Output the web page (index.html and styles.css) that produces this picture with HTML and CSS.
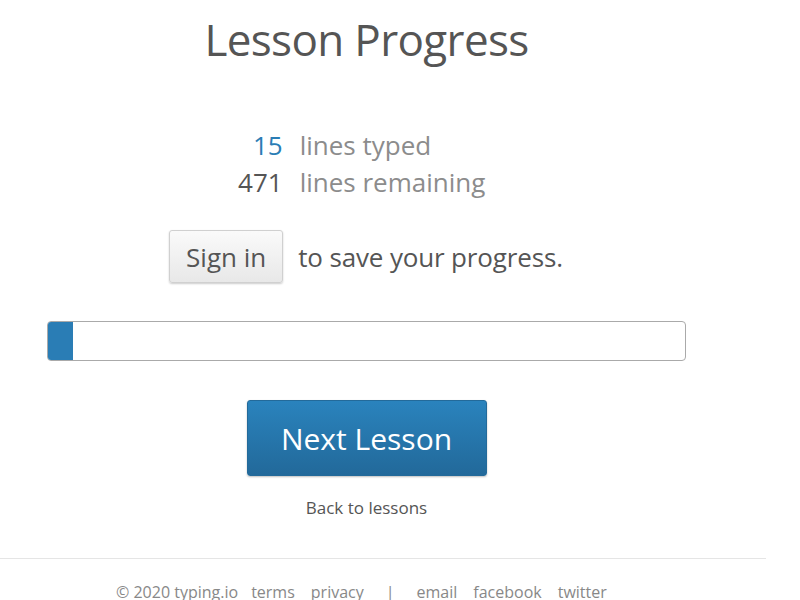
FILE: index.html
```html
<!DOCTYPE html>
<html>
<head>
<meta charset="utf-8">
<link rel="stylesheet" href="styles.css">
</head>
<body>
<div class="page">
  <main class="content">
    <h1 class="title">Lesson Progress</h1>
    <div class="stats">
      <div class="stat"><span class="num typed">15</span><span class="label">lines typed</span></div>
      <div class="stat"><span class="num">471</span><span class="label">lines remaining</span></div>
    </div>
    <div class="signin-row">
      <button class="signin">Sign in</button>
      <span class="save">to save your progress.</span>
    </div>
    <div class="bar"><div class="fill" style="width:25px"></div></div>
    <button class="next">Next Lesson</button>
    <a class="back" href="#">Back to lessons</a>
  </main>
  <footer class="footer">
    <div class="links">
      <span class="copy">© 2020 typing.io</span>
      <a href="#">terms</a>
      <a href="#">privacy</a>
      <span class="sep">|</span>
      <a href="#">email</a>
      <a href="#">facebook</a>
      <a href="#">twitter</a>
    </div>
  </footer>
</div>
</body>
</html>
```
FILE: styles.css
```css
html, body { margin: 0; padding: 0; background: #fff; }
body { font-family: "Open Sans", "Noto Sans", sans-serif; color: #555; }
.page { width: 766px; }
.content {
  width: 733px;
  display: flex;
  flex-direction: column;
  align-items: center;
}
.title {
  margin: 11px 0 0;
  font-weight: 400;
  font-size: 44px;
  line-height: 56px;
  color: #555;
  letter-spacing: -0.65px;
}
.stats {
  margin-top: 60px;
  margin-right: 28px;
  display: flex;
  flex-direction: column;
  font-size: 26px;
  line-height: 37px;
}
.stat { display: flex; }
.num { width: 63px; text-align: right; margin-right: 17px; color: #555; }
.num.typed { color: #2a7db5; }
.label { color: #8c8c8c; }
.signin-row {
  margin-top: 29px;
  margin-right: 1px;
  display: flex;
  align-items: center;
}
.signin {
  font-family: inherit;
  font-size: 26px;
  color: #555;
  height: 53px;
  padding: 0 16px;
  border: 1px solid #d0d0d0;
  border-radius: 3px;
  background: linear-gradient(#fafafa, #e8e8e8);
  box-shadow: 0 1px 2px rgba(0,0,0,0.2);
}
.save { font-size: 26px; margin-left: 15px; color: #555; letter-spacing: -0.15px; }
.bar {
  margin-top: 38px;
  width: 637px;
  height: 38px;
  border: 1px solid #aaa;
  border-radius: 4px;
  overflow: hidden;
}
.fill { height: 100%; background: #2a7db5; }
.next {
  margin-top: 39px;
  width: 240px;
  height: 76px;
  font-family: inherit;
  font-size: 30px;
  color: #fff;
  border: 1px solid #236a9a;
  border-radius: 3px;
  background: linear-gradient(#2a83bd, #22699a);
  box-shadow: 0 1px 2px rgba(0,0,0,0.25);
}
.back {
  margin-top: 20px;
  font-size: 17px;
  color: #555;
  text-decoration: none;
}
.footer {
  margin-top: 39px;
  border-top: 1px solid #e5e5e5;
}
.links {
  padding-left: 116px;
  padding-top: 22px;
  font-size: 16px;
  color: #888;
  display: flex;
  gap: 16px;
}
.copy { margin-right: -3px; }
.links a { color: #888; text-decoration: none; }
.sep { margin: 0 6px; }
```
